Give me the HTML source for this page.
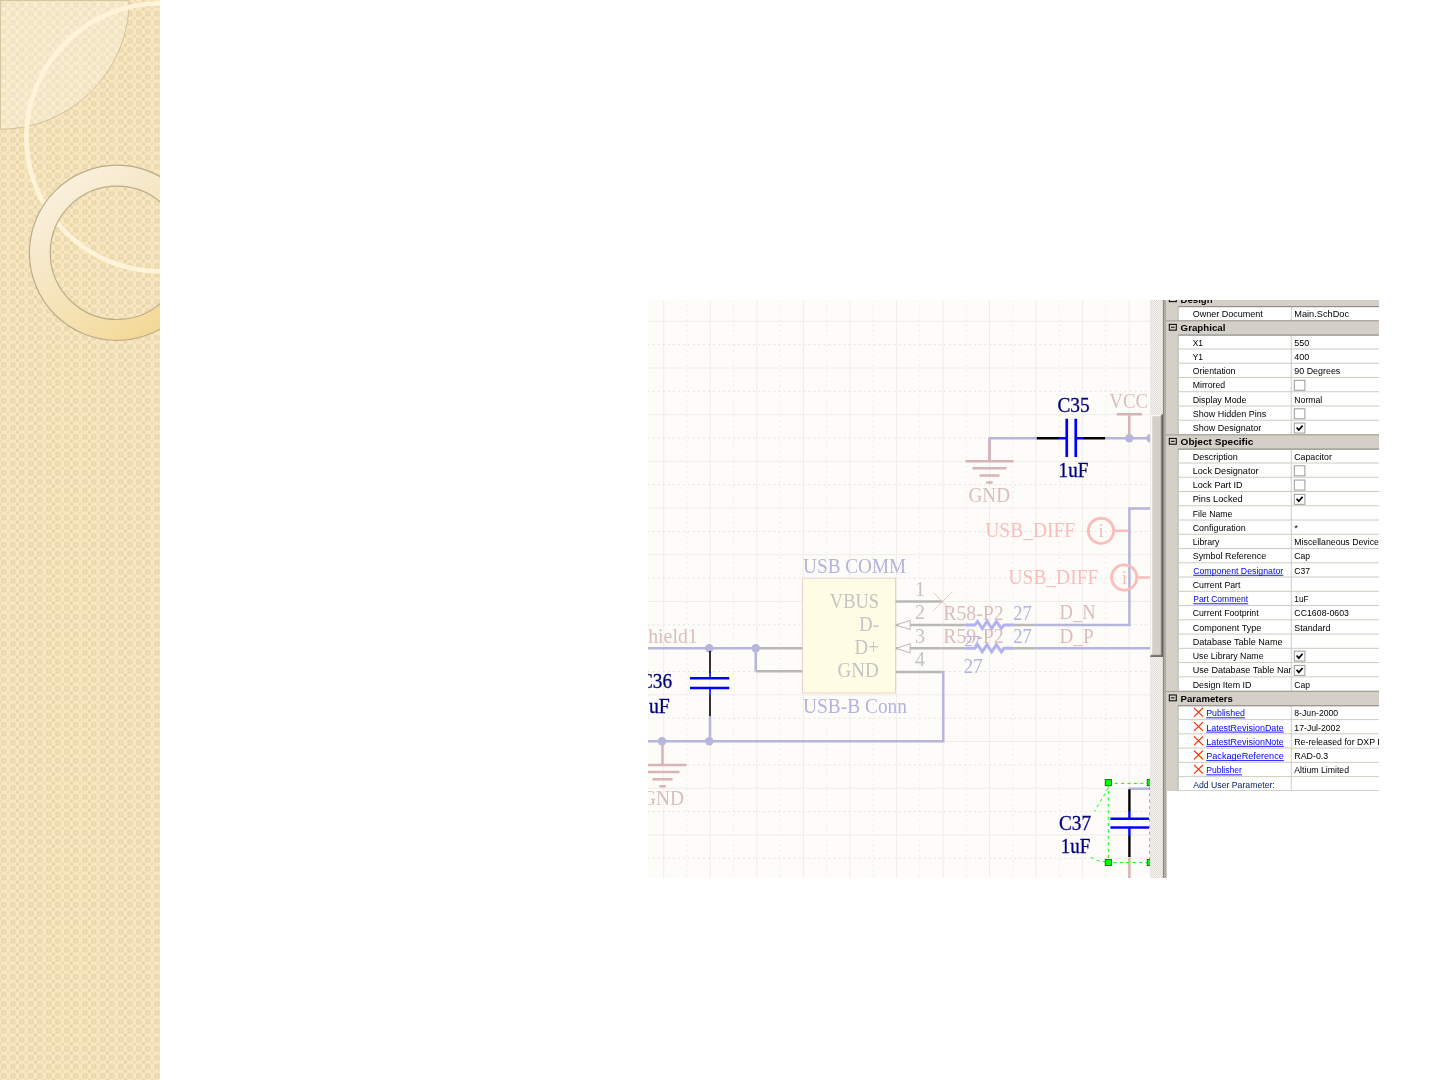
<!DOCTYPE html>
<html lang="en"><head><meta charset="utf-8"><title>Slide</title>
<style>
html,body{margin:0;padding:0;background:#fff;}
body{width:1440px;height:1080px;overflow:hidden;position:relative;font-family:"Liberation Sans",sans-serif;}
svg{position:absolute;left:0;top:0;display:block;}
.sch text{font-family:"Liberation Serif",serif;font-size:20.2px;}
.pg text{font-family:"Liberation Sans",sans-serif;font-size:9.6px;fill:#000;}
.pg .b{font-weight:bold;}
.pg .lnk{fill:#0000ff;}
</style></head><body>

<svg width="1440" height="1080" viewBox="0 0 1440 1080">
<defs>
<pattern id="tile" x="0" y="0.6" width="18" height="9" patternUnits="userSpaceOnUse">
<rect width="18" height="9" fill="#f9e8bf"/>
<rect x="2.0" y="2.4" width="3.6" height="3.6" fill="#f6e5bc" stroke="#e7d5ac" stroke-width="1.5"/>
<rect x="11.0" y="2.4" width="3.6" height="3.6" fill="#f6e5bc" stroke="#e7d5ac" stroke-width="1.5"/>
<rect x="6.9" y="7.0" width="3" height="3" fill="#eddcb4"/>
<rect x="6.9" y="-2.0" width="3" height="3" fill="#eddcb4"/>
<rect x="15.9" y="7.0" width="3" height="3" fill="#e6d3aa"/>
<rect x="15.9" y="-2.0" width="3" height="3" fill="#e6d3aa"/>
<rect x="-2.1" y="7.0" width="3" height="3" fill="#e6d3aa"/>
<rect x="-2.1" y="-2.0" width="3" height="3" fill="#e6d3aa"/>
</pattern>
<pattern id="tile2" x="4.5" y="4.8" width="18" height="9" patternUnits="userSpaceOnUse">
<rect width="18" height="9" fill="#f9e8bf"/>
<rect x="2.0" y="2.4" width="3.6" height="3.6" fill="#f6e5bc" stroke="#e7d5ac" stroke-width="1.5"/>
<rect x="11.0" y="2.4" width="3.6" height="3.6" fill="#f6e5bc" stroke="#e7d5ac" stroke-width="1.5"/>
<rect x="6.9" y="7.0" width="3" height="3" fill="#eddcb4"/>
<rect x="6.9" y="-2.0" width="3" height="3" fill="#eddcb4"/>
<rect x="15.9" y="7.0" width="3" height="3" fill="#e6d3aa"/>
<rect x="15.9" y="-2.0" width="3" height="3" fill="#e6d3aa"/>
<rect x="-2.1" y="7.0" width="3" height="3" fill="#e6d3aa"/>
<rect x="-2.1" y="-2.0" width="3" height="3" fill="#e6d3aa"/>
</pattern>
<linearGradient id="ringg" x1="0.1" y1="0.1" x2="0.8" y2="1">
<stop offset="0" stop-color="#fbf2e0"/>
<stop offset="0.27" stop-color="#f6e9cb"/>
<stop offset="0.6" stop-color="#f5e2b2"/>
<stop offset="0.85" stop-color="#f4db9c"/>
<stop offset="1" stop-color="#f2d48d"/>
</linearGradient>
<clipPath id="sbclip"><rect x="0" y="0" width="160" height="1080"/></clipPath>
<clipPath id="schclip"><rect x="648" y="300" width="518.7" height="578"/></clipPath>
<clipPath id="pgclip"><rect x="1166.7" y="300" width="212.3" height="490.6"/></clipPath>
<filter id="soft2" x="0" y="0" width="1" height="1"><feGaussianBlur stdDeviation="0.55"/></filter>
<filter id="soft" filterUnits="userSpaceOnUse" x="600" y="280" width="800" height="620"><feGaussianBlur stdDeviation="0.4"/></filter>
</defs>
<g clip-path="url(#sbclip)">
<rect x="-5" y="-5" width="170" height="1090" fill="url(#tile)" filter="url(#soft2)"/>
<path d="M0,0 L129.3,0 A129.3,129.3 0 0 1 0,129.3 Z" fill="url(#tile2)" fill-opacity="0.22"/>
<path d="M0,0 L129.3,0 A129.3,129.3 0 0 1 0,129.3 Z" fill="#ffffff" fill-opacity="0.26"/>
<path d="M129.3,0 A129.3,129.3 0 0 1 0,129.3" fill="none" stroke="#d3c29a" stroke-width="1"/>
<rect x="0" y="0" width="129.3" height="1.1" fill="#d8c8a1"/>
<rect x="0" y="0" width="1.1" height="129.3" fill="#d8c8a1"/>
<circle cx="160.4" cy="137.4" r="134" fill="none" stroke="#fff4d9" stroke-width="4.7"/>
<path fill-rule="evenodd" fill="url(#ringg)" stroke="#bbad8a" stroke-width="1.2" d="M29.4,252.8 a87.6,87.6 0 1 0 175.2,0 a87.6,87.6 0 1 0 -175.2,0 Z M50.3,252.8 a66.7,66.7 0 1 1 133.4,0 a66.7,66.7 0 1 1 -133.4,0 Z"/>
</g>

<g clip-path="url(#schclip)"><g class="sch" filter="url(#soft)">
<rect x="640" y="292" width="536" height="594" fill="#fdfcf8"/>
<line x1="663.75" y1="294.4" x2="663.75" y2="884" stroke="#efedea" stroke-width="1"/>
<line x1="687.02" y1="294.4" x2="687.02" y2="884" stroke="#e9e8e4" stroke-width="1" stroke-dasharray="1.4 3.65"/>
<line x1="710.29" y1="294.4" x2="710.29" y2="884" stroke="#efedea" stroke-width="1"/>
<line x1="733.56" y1="294.4" x2="733.56" y2="884" stroke="#e9e8e4" stroke-width="1" stroke-dasharray="1.4 3.65"/>
<line x1="756.83" y1="294.4" x2="756.83" y2="884" stroke="#efedea" stroke-width="1"/>
<line x1="780.1" y1="294.4" x2="780.1" y2="884" stroke="#e9e8e4" stroke-width="1" stroke-dasharray="1.4 3.65"/>
<line x1="803.37" y1="294.4" x2="803.37" y2="884" stroke="#efedea" stroke-width="1"/>
<line x1="826.64" y1="294.4" x2="826.64" y2="884" stroke="#e9e8e4" stroke-width="1" stroke-dasharray="1.4 3.65"/>
<line x1="849.91" y1="294.4" x2="849.91" y2="884" stroke="#efedea" stroke-width="1"/>
<line x1="873.18" y1="294.4" x2="873.18" y2="884" stroke="#e9e8e4" stroke-width="1" stroke-dasharray="1.4 3.65"/>
<line x1="896.45" y1="294.4" x2="896.45" y2="884" stroke="#efedea" stroke-width="1"/>
<line x1="919.72" y1="294.4" x2="919.72" y2="884" stroke="#e9e8e4" stroke-width="1" stroke-dasharray="1.4 3.65"/>
<line x1="942.99" y1="294.4" x2="942.99" y2="884" stroke="#efedea" stroke-width="1"/>
<line x1="966.26" y1="294.4" x2="966.26" y2="884" stroke="#e9e8e4" stroke-width="1" stroke-dasharray="1.4 3.65"/>
<line x1="989.53" y1="294.4" x2="989.53" y2="884" stroke="#efedea" stroke-width="1"/>
<line x1="1012.8" y1="294.4" x2="1012.8" y2="884" stroke="#e9e8e4" stroke-width="1" stroke-dasharray="1.4 3.65"/>
<line x1="1036.07" y1="294.4" x2="1036.07" y2="884" stroke="#efedea" stroke-width="1"/>
<line x1="1059.34" y1="294.4" x2="1059.34" y2="884" stroke="#e9e8e4" stroke-width="1" stroke-dasharray="1.4 3.65"/>
<line x1="1082.61" y1="294.4" x2="1082.61" y2="884" stroke="#efedea" stroke-width="1"/>
<line x1="1105.88" y1="294.4" x2="1105.88" y2="884" stroke="#e9e8e4" stroke-width="1" stroke-dasharray="1.4 3.65"/>
<line x1="1129.15" y1="294.4" x2="1129.15" y2="884" stroke="#efedea" stroke-width="1"/>
<line x1="642.6" y1="321.25" x2="1150" y2="321.25" stroke="#efedea" stroke-width="1"/>
<line x1="642.6" y1="344.6" x2="1150" y2="344.6" stroke="#e7e6e2" stroke-width="1" stroke-dasharray="2.3 2.72"/>
<line x1="642.6" y1="367.95" x2="1150" y2="367.95" stroke="#efedea" stroke-width="1"/>
<line x1="642.6" y1="391.3" x2="1150" y2="391.3" stroke="#e7e6e2" stroke-width="1" stroke-dasharray="2.3 2.72"/>
<line x1="642.6" y1="414.65" x2="1150" y2="414.65" stroke="#efedea" stroke-width="1"/>
<line x1="642.6" y1="438.0" x2="1150" y2="438.0" stroke="#e7e6e2" stroke-width="1" stroke-dasharray="2.3 2.72"/>
<line x1="642.6" y1="461.35" x2="1150" y2="461.35" stroke="#efedea" stroke-width="1"/>
<line x1="642.6" y1="484.7" x2="1150" y2="484.7" stroke="#e7e6e2" stroke-width="1" stroke-dasharray="2.3 2.72"/>
<line x1="642.6" y1="508.05" x2="1150" y2="508.05" stroke="#efedea" stroke-width="1"/>
<line x1="642.6" y1="531.4" x2="1150" y2="531.4" stroke="#e7e6e2" stroke-width="1" stroke-dasharray="2.3 2.72"/>
<line x1="642.6" y1="554.75" x2="1150" y2="554.75" stroke="#efedea" stroke-width="1"/>
<line x1="642.6" y1="578.1" x2="1150" y2="578.1" stroke="#e7e6e2" stroke-width="1" stroke-dasharray="2.3 2.72"/>
<line x1="642.6" y1="601.45" x2="1150" y2="601.45" stroke="#efedea" stroke-width="1"/>
<line x1="642.6" y1="624.8" x2="1150" y2="624.8" stroke="#e7e6e2" stroke-width="1" stroke-dasharray="2.3 2.72"/>
<line x1="642.6" y1="648.15" x2="1150" y2="648.15" stroke="#efedea" stroke-width="1"/>
<line x1="642.6" y1="671.5" x2="1150" y2="671.5" stroke="#e7e6e2" stroke-width="1" stroke-dasharray="2.3 2.72"/>
<line x1="642.6" y1="694.85" x2="1150" y2="694.85" stroke="#efedea" stroke-width="1"/>
<line x1="642.6" y1="718.2" x2="1150" y2="718.2" stroke="#e7e6e2" stroke-width="1" stroke-dasharray="2.3 2.72"/>
<line x1="642.6" y1="741.55" x2="1150" y2="741.55" stroke="#efedea" stroke-width="1"/>
<line x1="642.6" y1="764.9" x2="1150" y2="764.9" stroke="#e7e6e2" stroke-width="1" stroke-dasharray="2.3 2.72"/>
<line x1="642.6" y1="788.25" x2="1150" y2="788.25" stroke="#efedea" stroke-width="1"/>
<line x1="642.6" y1="811.6" x2="1150" y2="811.6" stroke="#e7e6e2" stroke-width="1" stroke-dasharray="2.3 2.72"/>
<line x1="642.6" y1="834.95" x2="1150" y2="834.95" stroke="#efedea" stroke-width="1"/>
<line x1="642.6" y1="858.3" x2="1150" y2="858.3" stroke="#e7e6e2" stroke-width="1" stroke-dasharray="2.3 2.72"/>
<polyline points="989.5,461.25 989.5,438.25 1036.75,438.25" fill="none" stroke="#b5b5dd" stroke-width="2.5" />
<line x1="989.5" y1="439.25" x2="989.5" y2="461.25" stroke="#d9b4b4" stroke-width="2.5" />
<line x1="965.5" y1="461.25" x2="1013.5" y2="461.25" stroke="#d9b4b4" stroke-width="2.5" />
<line x1="972.5" y1="468.35" x2="1006.5" y2="468.35" stroke="#d9b4b4" stroke-width="2.5" />
<line x1="979.5" y1="475.55" x2="999.5" y2="475.55" stroke="#d9b4b4" stroke-width="2.5" />
<line x1="986.3" y1="482.55" x2="992.7" y2="482.55" stroke="#d9b4b4" stroke-width="2.5" />
<text x="968.5" y="501.5" fill="#dcbcbc" textLength="41.5" lengthAdjust="spacingAndGlyphs">GND</text>
<line x1="1105" y1="438.25" x2="1150" y2="438.25" stroke="#b5b5dd" stroke-width="2.5" />
<circle cx="1129.3" cy="438.25" r="4.2" fill="#b5b5dd"/>
<circle cx="1150.5" cy="438.25" r="4.2" fill="#b5b5dd"/>
<line x1="1129.3" y1="414.25" x2="1129.3" y2="435.25" stroke="#d9b4b4" stroke-width="2.5" />
<line x1="1116.75" y1="414.25" x2="1142" y2="414.25" stroke="#d9b4b4" stroke-width="2.5" />
<text x="1109.3" y="408.4" fill="#dcbcbc" textLength="38.8" lengthAdjust="spacingAndGlyphs">VCC</text>
<line x1="1036.75" y1="438.25" x2="1059" y2="438.25" stroke="#000" stroke-width="2.5" />
<line x1="1083.5" y1="438.25" x2="1105" y2="438.25" stroke="#000" stroke-width="2.5" />
<line x1="1058.5" y1="438.25" x2="1066.75" y2="438.25" stroke="#0000ff" stroke-width="2.5" />
<line x1="1075.75" y1="438.25" x2="1084" y2="438.25" stroke="#0000ff" stroke-width="2.5" />
<line x1="1066.75" y1="418.75" x2="1066.75" y2="457" stroke="#0000ff" stroke-width="2.7" />
<line x1="1075.75" y1="418.75" x2="1075.75" y2="457" stroke="#0000ff" stroke-width="2.7" />
<text x="1057.4" y="411.9" fill="#000080" stroke="#000080" stroke-width="0.3" textLength="32.2" lengthAdjust="spacingAndGlyphs">C35</text>
<text x="1058.6" y="477" fill="#000080" stroke="#000080" stroke-width="0.3" textLength="29.8" lengthAdjust="spacingAndGlyphs">1uF</text>
<polyline points="1150,508.5 1129.4,508.5 1129.4,625 1035.2,625" fill="none" stroke="#b5b5dd" stroke-width="2.5" />
<line x1="1035.2" y1="648.3" x2="1150" y2="648.3" stroke="#b5b5dd" stroke-width="2.5" />
<text x="985.3" y="537" fill="#fbbcbc" textLength="89.8" lengthAdjust="spacingAndGlyphs">USB_DIFF</text>
<circle cx="1101" cy="530.8" r="12.6" fill="none" stroke="#fbbcbc" stroke-width="2.9"/>
<line x1="1114" y1="530.8" x2="1128.4" y2="530.8" stroke="#fbbcbc" stroke-width="2.5" />
<text x="1101.2" y="536.8" fill="#fbbcbc" text-anchor="middle" style="font-size:19px">i</text>
<text x="1008.5" y="583.6" fill="#fbbcbc" textLength="89.8" lengthAdjust="spacingAndGlyphs">USB_DIFF</text>
<circle cx="1124.2" cy="577.5" r="12.6" fill="none" stroke="#fbbcbc" stroke-width="2.9"/>
<line x1="1137.2" y1="577.5" x2="1150" y2="577.5" stroke="#fbbcbc" stroke-width="2.5" />
<text x="1124.4" y="583.5" fill="#fbbcbc" text-anchor="middle" style="font-size:19px">i</text>
<rect x="802.5" y="578.25" width="93" height="114.75" fill="#fffde6" stroke="#ecd0cb" stroke-width="1"/>
<text x="803.1" y="572.75" fill="#b3b3e0" textLength="103.1" lengthAdjust="spacingAndGlyphs">USB COMM</text>
<text x="803" y="712.5" fill="#b3b3e0" textLength="104" lengthAdjust="spacingAndGlyphs">USB-B Conn</text>
<text x="829.8" y="608.1" fill="#c4c4c4" textLength="49.3" lengthAdjust="spacingAndGlyphs">VBUS</text>
<text x="859.3" y="630.8" fill="#c4c4c4" textLength="19.6" lengthAdjust="spacingAndGlyphs">D-</text>
<text x="854.5" y="654" fill="#c4c4c4" textLength="24.3" lengthAdjust="spacingAndGlyphs">D+</text>
<text x="837.5" y="676.6" fill="#c4c4c4" textLength="41.3" lengthAdjust="spacingAndGlyphs">GND</text>
<line x1="895.6" y1="601.5" x2="942.5" y2="601.5" stroke="#b8b8b6" stroke-width="2.5" />
<line x1="895.6" y1="625" x2="942.5" y2="625" stroke="#b8b8b6" stroke-width="2.5" />
<line x1="895.6" y1="648.3" x2="942.5" y2="648.3" stroke="#b8b8b6" stroke-width="2.5" />
<line x1="895.6" y1="671.9" x2="942.5" y2="671.9" stroke="#b8b8b6" stroke-width="2.5" />
<line x1="942.5" y1="625" x2="966.5" y2="625" stroke="#b8b8b6" stroke-width="2.5" />
<line x1="942.5" y1="648.3" x2="966.5" y2="648.3" stroke="#b8b8b6" stroke-width="2.5" />
<line x1="1013.3" y1="625" x2="1035.2" y2="625" stroke="#b8b8b6" stroke-width="2.5" />
<line x1="1013.3" y1="648.3" x2="1035.2" y2="648.3" stroke="#b8b8b6" stroke-width="2.5" />
<polygon points="896.2,625 910.2,620.4 910.2,629.6" fill="#fdfcf8" stroke="#b8b8b6" stroke-width="1"/>
<polygon points="896.2,648.3 910.2,643.6999999999999 910.2,652.9" fill="#fdfcf8" stroke="#b8b8b6" stroke-width="1"/>
<text x="920" y="595.8" fill="#c4c4c4" text-anchor="middle">1</text>
<text x="920" y="619.2" fill="#c4c4c4" text-anchor="middle">2</text>
<text x="920" y="642.7" fill="#c4c4c4" text-anchor="middle">3</text>
<text x="920" y="666" fill="#c4c4c4" text-anchor="middle">4</text>
<line x1="933.5" y1="592.5" x2="951.5" y2="610.5" stroke="#f6c4c4" stroke-width="1" />
<line x1="933.5" y1="610.5" x2="951.5" y2="592.5" stroke="#f6c4c4" stroke-width="1" />
<polyline points="966.1,625 975,625 977.6,621.3 982.3,628.6 987,621.3 991.7,628.6 996.4,621.3 1001.4,628.6 1004,625 1013.5,625" fill="none" stroke="#b2b2f2" stroke-width="2.9" stroke-linejoin="miter"/>
<polyline points="966.1,648.3 975,648.3 977.6,644.5999999999999 982.3,651.9 987,644.5999999999999 991.7,651.9 996.4,644.5999999999999 1001.4,651.9 1004,648.3 1013.5,648.3" fill="none" stroke="#b2b2f2" stroke-width="2.9" stroke-linejoin="miter"/>
<text x="943.2" y="619.8" fill="#dcbcbc" textLength="60.6" lengthAdjust="spacingAndGlyphs">R58-P2</text>
<text x="943.2" y="643.3" fill="#dcbcbc" textLength="60.6" lengthAdjust="spacingAndGlyphs">R59-P2</text>
<text x="1013.3" y="619.8" fill="#b3b3e0" textLength="18.6" lengthAdjust="spacingAndGlyphs">27</text>
<text x="1013.3" y="643.3" fill="#b3b3e0" textLength="18.6" lengthAdjust="spacingAndGlyphs">27</text>
<text x="964.6" y="646" fill="#b3b3e0" style="font-size:15.6px" textLength="16" lengthAdjust="spacingAndGlyphs">27</text>
<text x="963.4" y="672.6" fill="#b3b3e0" textLength="19.4" lengthAdjust="spacingAndGlyphs">27</text>
<text x="1059.6" y="619.2" fill="#dcbcbc" textLength="36" lengthAdjust="spacingAndGlyphs">D_N</text>
<text x="1059.6" y="642.7" fill="#dcbcbc" textLength="34" lengthAdjust="spacingAndGlyphs">D_P</text>
<polyline points="942.5,671.9 943.25,671.9 943.25,741.25 648,741.25" fill="none" stroke="#b5b5dd" stroke-width="2.5" />
<line x1="755.75" y1="648.25" x2="802.5" y2="648.25" stroke="#b8b8b6" stroke-width="2.5" />
<line x1="755.75" y1="671.25" x2="802.5" y2="671.25" stroke="#b8b8b6" stroke-width="2.5" />
<polyline points="648,648.25 755.75,648.25 755.75,671.25" fill="none" stroke="#b5b5dd" stroke-width="2.5" />
<circle cx="709.25" cy="648.25" r="4.2" fill="#b5b5dd"/>
<circle cx="755.75" cy="648.25" r="4.2" fill="#b5b5dd"/>
<circle cx="662" cy="741.25" r="4.2" fill="#b5b5dd"/>
<circle cx="709.25" cy="741.25" r="4.2" fill="#b5b5dd"/>
<text x="648.2" y="642.6" fill="#dcbcbc" textLength="49.6" lengthAdjust="spacingAndGlyphs">hield1</text>
<line x1="710" y1="651" x2="710" y2="673" stroke="#000" stroke-width="1.6" />
<line x1="710" y1="672.5" x2="710" y2="678" stroke="#0000ff" stroke-width="1.6" />
<line x1="690" y1="678.25" x2="729.25" y2="678.25" stroke="#0000ff" stroke-width="2.6" />
<line x1="690" y1="688" x2="729.25" y2="688" stroke="#0000ff" stroke-width="2.6" />
<line x1="710" y1="688" x2="710" y2="695" stroke="#0000ff" stroke-width="1.6" />
<line x1="710" y1="695" x2="710" y2="716.5" stroke="#000" stroke-width="1.6" />
<line x1="710" y1="716.5" x2="710" y2="741.25" stroke="#b5b5dd" stroke-width="2.5" />
<text x="672" y="688.25" fill="#000080" stroke="#000080" stroke-width="0.3" text-anchor="end" textLength="32" lengthAdjust="spacingAndGlyphs">C36</text>
<text x="669.8" y="712.6" fill="#000080" stroke="#000080" stroke-width="0.3" text-anchor="end" textLength="30.8" lengthAdjust="spacingAndGlyphs">1uF</text>
<line x1="662.5" y1="744" x2="662.5" y2="765" stroke="#d9b4b4" stroke-width="2.5" />
<line x1="638.5" y1="765" x2="686.5" y2="765" stroke="#d9b4b4" stroke-width="2.5" />
<line x1="645.5" y1="772.1" x2="679.5" y2="772.1" stroke="#d9b4b4" stroke-width="2.5" />
<line x1="652.5" y1="779.3" x2="672.5" y2="779.3" stroke="#d9b4b4" stroke-width="2.5" />
<line x1="659.3" y1="786.3" x2="665.7" y2="786.3" stroke="#d9b4b4" stroke-width="2.5" />
<text x="684" y="805.2" fill="#dcbcbc" text-anchor="end" textLength="42" lengthAdjust="spacingAndGlyphs">GND</text>
<line x1="1128.5" y1="788.7" x2="1150" y2="788.7" stroke="#b5b5dd" stroke-width="2.5" />
<line x1="1129.4" y1="789.3" x2="1129.4" y2="811" stroke="#000" stroke-width="2.4" />
<line x1="1129.4" y1="810.8" x2="1129.4" y2="818" stroke="#0000ff" stroke-width="2.4" />
<line x1="1110.4" y1="818.75" x2="1149" y2="818.75" stroke="#0000ff" stroke-width="2.7" />
<line x1="1110.4" y1="827.5" x2="1149" y2="827.5" stroke="#0000ff" stroke-width="2.7" />
<line x1="1129.4" y1="828" x2="1129.4" y2="836" stroke="#0000ff" stroke-width="2.4" />
<line x1="1129.4" y1="835.8" x2="1129.4" y2="857" stroke="#000" stroke-width="2.4" />
<line x1="1129.4" y1="857.4" x2="1129.4" y2="878" stroke="#d9b4b4" stroke-width="2.5" />
<text x="1059" y="829.6" fill="#000080" stroke="#000080" stroke-width="0.3" textLength="32" lengthAdjust="spacingAndGlyphs">C37</text>
<text x="1060.7" y="852.5" fill="#000080" stroke="#000080" stroke-width="0.3" textLength="29.6" lengthAdjust="spacingAndGlyphs">1uF</text>
<rect x="1108.3" y="783.4" width="41.4" height="79.1" fill="none" stroke="#00ff00" stroke-width="1" stroke-dasharray="3 3.4"/>
<line x1="1108.3" y1="788" x2="1094.4" y2="811.5" stroke="#00ff00" stroke-width="1" stroke-dasharray="3 3.4"/>
<polyline points="1091,857.3 1097,860.5 1105,861.8" fill="none" stroke="#00ff00" stroke-width="1" stroke-dasharray="3 3.4"/>
<rect x="1105.2" y="779.5" width="6.2" height="6.2" fill="#00ff00" stroke="#006000" stroke-width="0.8"/>
<rect x="1147.2" y="779.5" width="6.2" height="6.2" fill="#00ff00" stroke="#006000" stroke-width="0.8"/>
<rect x="1105.2" y="859.4" width="6.2" height="6.2" fill="#00ff00" stroke="#006000" stroke-width="0.8"/>
<rect x="1147.2" y="859.4" width="6.2" height="6.2" fill="#00ff00" stroke="#006000" stroke-width="0.8"/>
<pattern id="hatch" x="1150" y="300" width="2" height="2" patternUnits="userSpaceOnUse"><rect width="2" height="2" fill="#fff"/><rect width="1" height="1" fill="#d4d0c8"/><rect x="1" y="1" width="1" height="1" fill="#d4d0c8"/></pattern>
<rect x="1150" y="292" width="13.3" height="594" fill="#ebe9e4"/>
<rect x="1150" y="292" width="13.3" height="594" fill="url(#hatch)" opacity="0.6"/>
<rect x="1150.2" y="414.3" width="12.6" height="242.4" fill="#d4d0c8"/>
<rect x="1150.2" y="414.3" width="1" height="241.4" fill="#f1efea"/>
<rect x="1151.1" y="415.2" width="1.1" height="239.6" fill="#ffffff"/>
<rect x="1150.2" y="414.3" width="11.6" height="1" fill="#f1efea"/>
<rect x="1151.1" y="415.2" width="9.8" height="1" fill="#ffffff"/>
<rect x="1160.8" y="415.2" width="1" height="240.6" fill="#86847f"/>
<rect x="1151.1" y="654.8" width="10.7" height="1" fill="#86847f"/>
<rect x="1161.8" y="414.3" width="1" height="242.4" fill="#45433f"/>
<rect x="1150.2" y="655.7" width="12.6" height="1" fill="#45433f"/>
<rect x="1162.9" y="292" width="1.2" height="594" fill="#8b8984"/>
<rect x="1164.0" y="292" width="8" height="594" fill="#b1ada5"/>
</g></g>
<g clip-path="url(#pgclip)"><g class="pg" filter="url(#soft)">
<rect x="1178" y="292" width="210" height="498.6" fill="#ffffff"/>
<rect x="1160" y="292" width="18.4" height="506" fill="#d4d0c8"/>
<rect x="1177.6" y="292" width="1" height="498.6" fill="#bab6ae"/>
<clipPath id="lblclip"><rect x="1178" y="290" width="113" height="520"/></clipPath>
<rect x="1290.8" y="300" width="1" height="490.6" fill="#d2cec4"/>
<rect x="1160" y="292.35" width="228" height="14.255" fill="#d4d0c8"/>
<rect x="1178.2" y="306.00" width="210" height="1.2" fill="#8f8d87"/>
<rect x="1160" y="291.75" width="228" height="1.1" fill="#a5a199"/>
<rect x="1169.3" y="295.85" width="7.0" height="5.8" fill="#d4d0c8" stroke="#000" stroke-width="1"/>
<line x1="1171" y1="298.75" x2="1174.6" y2="298.75" stroke="#000" stroke-width="1"/>
<text class="b" x="1180.6" y="302.85">Design</text>
<rect x="1178.4" y="319.96" width="210" height="1" fill="#cfcbc1"/>
<text x="1192.7" y="317.1" textLength="70.1" lengthAdjust="spacingAndGlyphs" clip-path="url(#lblclip)">Owner Document</text>
<text x="1294.3" y="317.1" textLength="54.7" lengthAdjust="spacingAndGlyphs">Main.SchDoc</text>
<rect x="1160" y="320.86" width="228" height="14.255" fill="#d4d0c8"/>
<rect x="1178.2" y="334.51" width="210" height="1.2" fill="#8f8d87"/>
<rect x="1160" y="320.25" width="228" height="1.1" fill="#a5a199"/>
<rect x="1169.3" y="324.36" width="7.0" height="5.8" fill="#d4d0c8" stroke="#000" stroke-width="1"/>
<line x1="1171" y1="327.25" x2="1174.6" y2="327.25" stroke="#000" stroke-width="1"/>
<text class="b" x="1180.6" y="331.36" textLength="44.8" lengthAdjust="spacingAndGlyphs">Graphical</text>
<rect x="1178.4" y="348.47" width="210" height="1" fill="#cfcbc1"/>
<text x="1192.7" y="345.61" textLength="10.3" lengthAdjust="spacingAndGlyphs" clip-path="url(#lblclip)">X1</text>
<text x="1294.3" y="345.61" textLength="15" lengthAdjust="spacingAndGlyphs">550</text>
<rect x="1178.4" y="362.72" width="210" height="1" fill="#cfcbc1"/>
<text x="1192.7" y="359.87" textLength="10.3" lengthAdjust="spacingAndGlyphs" clip-path="url(#lblclip)">Y1</text>
<text x="1294.3" y="359.87" textLength="15" lengthAdjust="spacingAndGlyphs">400</text>
<rect x="1178.4" y="376.98" width="210" height="1" fill="#cfcbc1"/>
<text x="1192.7" y="374.12" textLength="42.8" lengthAdjust="spacingAndGlyphs" clip-path="url(#lblclip)">Orientation</text>
<text x="1294.3" y="374.12" textLength="46" lengthAdjust="spacingAndGlyphs">90 Degrees</text>
<rect x="1178.4" y="391.23" width="210" height="1" fill="#cfcbc1"/>
<text x="1192.7" y="388.38" textLength="32.5" lengthAdjust="spacingAndGlyphs" clip-path="url(#lblclip)">Mirrored</text>
<rect x="1294.3" y="380.27" width="10.6" height="10" fill="#fff" stroke="#9a9a9a" stroke-width="1"/>
<rect x="1178.4" y="405.49" width="210" height="1" fill="#cfcbc1"/>
<text x="1192.7" y="402.63" textLength="53.8" lengthAdjust="spacingAndGlyphs" clip-path="url(#lblclip)">Display Mode</text>
<text x="1294.3" y="402.63" textLength="28" lengthAdjust="spacingAndGlyphs">Normal</text>
<rect x="1178.4" y="419.74" width="210" height="1" fill="#cfcbc1"/>
<text x="1192.7" y="416.89" textLength="73.5" lengthAdjust="spacingAndGlyphs" clip-path="url(#lblclip)">Show Hidden Pins</text>
<rect x="1294.3" y="408.79" width="10.6" height="10" fill="#fff" stroke="#9a9a9a" stroke-width="1"/>
<rect x="1178.4" y="434.00" width="210" height="1" fill="#cfcbc1"/>
<text x="1192.7" y="431.14" textLength="68.6" lengthAdjust="spacingAndGlyphs" clip-path="url(#lblclip)">Show Designator</text>
<rect x="1294.3" y="423.04" width="10.6" height="10" fill="#fff" stroke="#9a9a9a" stroke-width="1"/>
<path d="M1296.6,427.44 L1298.8,430.04 L1302.6,425.64" stroke="#000" stroke-width="1.7" fill="none"/>
<rect x="1160" y="434.90" width="228" height="14.255" fill="#d4d0c8"/>
<rect x="1178.2" y="448.55" width="210" height="1.2" fill="#8f8d87"/>
<rect x="1160" y="434.30" width="228" height="1.1" fill="#a5a199"/>
<rect x="1169.3" y="438.40" width="7.0" height="5.8" fill="#d4d0c8" stroke="#000" stroke-width="1"/>
<line x1="1171" y1="441.30" x2="1174.6" y2="441.30" stroke="#000" stroke-width="1"/>
<text class="b" x="1180.6" y="445.4" textLength="72.7" lengthAdjust="spacingAndGlyphs">Object Specific</text>
<rect x="1178.4" y="462.51" width="210" height="1" fill="#cfcbc1"/>
<text x="1192.7" y="459.65" textLength="45.1" lengthAdjust="spacingAndGlyphs" clip-path="url(#lblclip)">Description</text>
<text x="1294.3" y="459.65" textLength="37.5" lengthAdjust="spacingAndGlyphs">Capacitor</text>
<rect x="1178.4" y="476.76" width="210" height="1" fill="#cfcbc1"/>
<text x="1192.7" y="473.91" textLength="65.9" lengthAdjust="spacingAndGlyphs" clip-path="url(#lblclip)">Lock Designator</text>
<rect x="1294.3" y="465.81" width="10.6" height="10" fill="#fff" stroke="#9a9a9a" stroke-width="1"/>
<rect x="1178.4" y="491.02" width="210" height="1" fill="#cfcbc1"/>
<text x="1192.7" y="488.16" textLength="50" lengthAdjust="spacingAndGlyphs" clip-path="url(#lblclip)">Lock Part ID</text>
<rect x="1294.3" y="480.06" width="10.6" height="10" fill="#fff" stroke="#9a9a9a" stroke-width="1"/>
<rect x="1178.4" y="505.27" width="210" height="1" fill="#cfcbc1"/>
<text x="1192.7" y="502.42" textLength="50" lengthAdjust="spacingAndGlyphs" clip-path="url(#lblclip)">Pins Locked</text>
<rect x="1294.3" y="494.31" width="10.6" height="10" fill="#fff" stroke="#9a9a9a" stroke-width="1"/>
<path d="M1296.6,498.71 L1298.8,501.31 L1302.6,496.92" stroke="#000" stroke-width="1.7" fill="none"/>
<rect x="1178.4" y="519.53" width="210" height="1" fill="#cfcbc1"/>
<text x="1192.7" y="516.67" textLength="39.7" lengthAdjust="spacingAndGlyphs" clip-path="url(#lblclip)">File Name</text>
<rect x="1178.4" y="533.78" width="210" height="1" fill="#cfcbc1"/>
<text x="1192.7" y="530.93" textLength="52.9" lengthAdjust="spacingAndGlyphs" clip-path="url(#lblclip)">Configuration</text>
<text x="1294.3" y="530.93">*</text>
<rect x="1178.4" y="548.04" width="210" height="1" fill="#cfcbc1"/>
<text x="1192.7" y="545.18" textLength="26.7" lengthAdjust="spacingAndGlyphs" clip-path="url(#lblclip)">Library</text>
<text x="1294.3" y="545.18" textLength="89" lengthAdjust="spacingAndGlyphs">Miscellaneous Devices</text>
<rect x="1178.4" y="562.29" width="210" height="1" fill="#cfcbc1"/>
<text x="1192.7" y="559.44" textLength="73.5" lengthAdjust="spacingAndGlyphs" clip-path="url(#lblclip)">Symbol Reference</text>
<text x="1294.3" y="559.44" textLength="15.7" lengthAdjust="spacingAndGlyphs">Cap</text>
<rect x="1178.4" y="576.55" width="210" height="1" fill="#cfcbc1"/>
<text class="lnk" x="1193.2" y="573.69" textLength="90" lengthAdjust="spacingAndGlyphs">Component Designator</text>
<line x1="1193.2" y1="575.29" x2="1283.2" y2="575.29" stroke="#0000ff" stroke-width="0.9"/>
<text x="1294.3" y="573.69" textLength="15.7" lengthAdjust="spacingAndGlyphs">C37</text>
<rect x="1178.4" y="590.80" width="210" height="1" fill="#cfcbc1"/>
<text x="1192.7" y="587.95" textLength="47.8" lengthAdjust="spacingAndGlyphs" clip-path="url(#lblclip)">Current Part</text>
<rect x="1178.4" y="605.06" width="210" height="1" fill="#cfcbc1"/>
<text class="lnk" x="1193.2" y="602.2" textLength="55" lengthAdjust="spacingAndGlyphs">Part Comment</text>
<line x1="1193.2" y1="603.80" x2="1248.2" y2="603.80" stroke="#0000ff" stroke-width="0.9"/>
<text x="1294.3" y="602.2" textLength="14.4" lengthAdjust="spacingAndGlyphs">1uF</text>
<rect x="1178.4" y="619.31" width="210" height="1" fill="#cfcbc1"/>
<text x="1192.7" y="616.46" textLength="65.9" lengthAdjust="spacingAndGlyphs" clip-path="url(#lblclip)">Current Footprint</text>
<text x="1294.3" y="616.46" textLength="54.7" lengthAdjust="spacingAndGlyphs">CC1608-0603</text>
<rect x="1178.4" y="633.57" width="210" height="1" fill="#cfcbc1"/>
<text x="1192.7" y="630.71" textLength="68.6" lengthAdjust="spacingAndGlyphs" clip-path="url(#lblclip)">Component Type</text>
<text x="1294.3" y="630.71" textLength="36.1" lengthAdjust="spacingAndGlyphs">Standard</text>
<rect x="1178.4" y="647.82" width="210" height="1" fill="#cfcbc1"/>
<text x="1192.7" y="644.97" textLength="89.9" lengthAdjust="spacingAndGlyphs" clip-path="url(#lblclip)">Database Table Name</text>
<rect x="1178.4" y="662.08" width="210" height="1" fill="#cfcbc1"/>
<text x="1192.7" y="659.22" textLength="70.9" lengthAdjust="spacingAndGlyphs" clip-path="url(#lblclip)">Use Library Name</text>
<rect x="1294.3" y="651.12" width="10.6" height="10" fill="#fff" stroke="#9a9a9a" stroke-width="1"/>
<path d="M1296.6,655.52 L1298.8,658.12 L1302.6,653.72" stroke="#000" stroke-width="1.7" fill="none"/>
<rect x="1178.4" y="676.33" width="210" height="1" fill="#cfcbc1"/>
<text x="1192.7" y="673.48" textLength="108.5" lengthAdjust="spacingAndGlyphs" clip-path="url(#lblclip)">Use Database Table Name</text>
<rect x="1294.3" y="665.38" width="10.6" height="10" fill="#fff" stroke="#9a9a9a" stroke-width="1"/>
<path d="M1296.6,669.77 L1298.8,672.38 L1302.6,667.98" stroke="#000" stroke-width="1.7" fill="none"/>
<rect x="1178.4" y="690.59" width="210" height="1" fill="#cfcbc1"/>
<text x="1192.7" y="687.73" textLength="58.7" lengthAdjust="spacingAndGlyphs" clip-path="url(#lblclip)">Design Item ID</text>
<text x="1294.3" y="687.73" textLength="15.7" lengthAdjust="spacingAndGlyphs">Cap</text>
<rect x="1160" y="691.49" width="228" height="14.255" fill="#d4d0c8"/>
<rect x="1178.2" y="705.14" width="210" height="1.2" fill="#8f8d87"/>
<rect x="1160" y="690.89" width="228" height="1.1" fill="#a5a199"/>
<rect x="1169.3" y="694.99" width="7.0" height="5.8" fill="#d4d0c8" stroke="#000" stroke-width="1"/>
<line x1="1171" y1="697.89" x2="1174.6" y2="697.89" stroke="#000" stroke-width="1"/>
<text class="b" x="1180.6" y="701.99" textLength="52.3" lengthAdjust="spacingAndGlyphs">Parameters</text>
<rect x="1178.4" y="719.10" width="210" height="1" fill="#cfcbc1"/>
<path d="M1194,707.84 L1203,716.64 M1203,707.84 L1194,716.64" stroke="#ff2a00" stroke-width="1.25" fill="none"/>
<text class="lnk" x="1206.2" y="716.24" textLength="38.8" lengthAdjust="spacingAndGlyphs">Published</text>
<line x1="1206.2" y1="717.84" x2="1245.0" y2="717.84" stroke="#0000ff" stroke-width="0.9"/>
<text x="1294.3" y="716.24" textLength="43.9" lengthAdjust="spacingAndGlyphs">8-Jun-2000</text>
<rect x="1178.4" y="733.35" width="210" height="1" fill="#cfcbc1"/>
<path d="M1194,722.10 L1203,730.90 M1203,722.10 L1194,730.90" stroke="#ff2a00" stroke-width="1.25" fill="none"/>
<text class="lnk" x="1206.2" y="730.5" textLength="77.6" lengthAdjust="spacingAndGlyphs">LatestRevisionDate</text>
<line x1="1206.2" y1="732.10" x2="1283.8" y2="732.10" stroke="#0000ff" stroke-width="0.9"/>
<text x="1294.3" y="730.5" textLength="46" lengthAdjust="spacingAndGlyphs">17-Jul-2002</text>
<rect x="1178.4" y="747.61" width="210" height="1" fill="#cfcbc1"/>
<path d="M1194,736.35 L1203,745.15 M1203,736.35 L1194,745.15" stroke="#ff2a00" stroke-width="1.25" fill="none"/>
<text class="lnk" x="1206.2" y="744.75" textLength="77.6" lengthAdjust="spacingAndGlyphs">LatestRevisionNote</text>
<line x1="1206.2" y1="746.35" x2="1283.8" y2="746.35" stroke="#0000ff" stroke-width="0.9"/>
<text x="1294.3" y="744.75" textLength="118" lengthAdjust="spacingAndGlyphs">Re-released for DXP Platform.</text>
<rect x="1178.4" y="761.86" width="210" height="1" fill="#cfcbc1"/>
<path d="M1194,750.61 L1203,759.41 M1203,750.61 L1194,759.41" stroke="#ff2a00" stroke-width="1.25" fill="none"/>
<text class="lnk" x="1206.2" y="759.01" textLength="77.6" lengthAdjust="spacingAndGlyphs">PackageReference</text>
<line x1="1206.2" y1="760.61" x2="1283.8" y2="760.61" stroke="#0000ff" stroke-width="0.9"/>
<text x="1294.3" y="759.01" textLength="33.9" lengthAdjust="spacingAndGlyphs">RAD-0.3</text>
<rect x="1178.4" y="776.12" width="210" height="1" fill="#cfcbc1"/>
<path d="M1194,764.86 L1203,773.66 M1203,764.86 L1194,773.66" stroke="#ff2a00" stroke-width="1.25" fill="none"/>
<text class="lnk" x="1206.2" y="773.26" textLength="35.7" lengthAdjust="spacingAndGlyphs">Publisher</text>
<line x1="1206.2" y1="774.86" x2="1241.9" y2="774.86" stroke="#0000ff" stroke-width="0.9"/>
<text x="1294.3" y="773.26" textLength="54.7" lengthAdjust="spacingAndGlyphs">Altium Limited</text>
<rect x="1178.4" y="790.37" width="210" height="1" fill="#b9b8b6"/>
<text x="1193.2" y="787.52" textLength="81.6" lengthAdjust="spacingAndGlyphs" fill="#0a246a" style="fill:#0a246a">Add User Parameter:</text>
</g></g>
</svg>
</body></html>
